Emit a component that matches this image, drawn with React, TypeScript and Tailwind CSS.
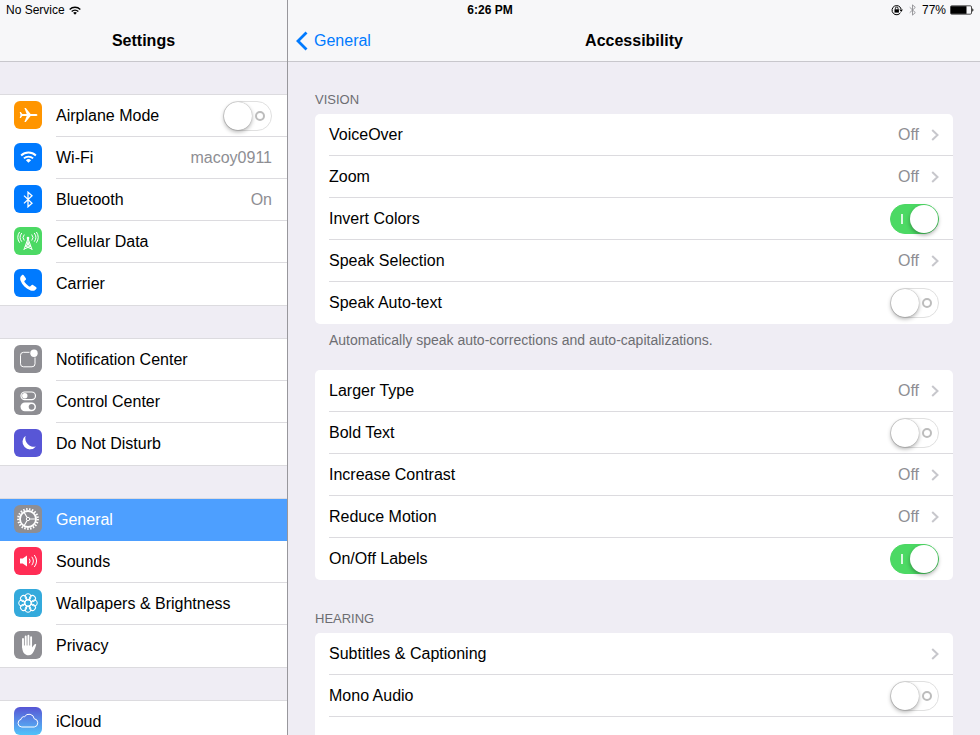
import React, { useState } from "react";
import clsx from "clsx";

type Item = {
  label: string;
  icon?: React.ReactNode;
  iconBg?: string;
  value?: string;
  toggle?: boolean;
  on?: boolean;
  active?: boolean;
};

const PlaneIcon = () => (
  <svg viewBox="0 0 28 28" className="size-7" fill="#fff">
    <path d="M23.500 14c0-.7-.8-1.100-2-1.100h-4.900L11.800 7h-1.400l2.300 5.900H8.300L6.800 11.100H5.700L6.500 14l-.8 2.900h1.100l1.500-1.800h4.400L10.400 21h1.400l4.800-5.900h4.900c1.200 0 2-.4 2-1.100z" />
  </svg>
);

const WifiIcon = ({ className }: { className?: string }) => (
  <svg viewBox="0 0 18 13" className={className} fill="none" stroke="currentColor" strokeWidth="2">
    <path d="M1 4.900a11.500 11.500 0 0 1 16 0" />
    <path d="M4 8a7.300 7.300 0 0 1 10 0" />
    <path d="M9 12.800 6.200 10a4 4 0 0 1 5.600 0z" fill="currentColor" stroke="none" />
  </svg>
);

const BluetoothIcon = ({ className }: { className?: string }) => (
  <svg viewBox="0 0 10 17" className={className} fill="none" stroke="currentColor" strokeWidth="1.300">
    <path d="M1 4.600 9 12.200l-4 3.600V1.200l4 3.600-8 7.600" />
  </svg>
);

const CellularIcon = () => (
  <svg viewBox="0 0 28 28" className="size-7" fill="none" stroke="#fff" strokeWidth="1">
    <path d="M14 11.500 9.800 23M14 11.500 18.200 23M12.600 16h2.800M11.500 19h5M12.600 16l4.200 3.200L10.300 22M15.400 16l-4.200 3.200 6.500 2.800M14 11v5" />
    <circle cx="14" cy="11" r="1.300" fill="#fff" stroke="none" />
    <path d="M10.300 13.500a4.500 4.500 0 0 1 0-6M17.700 13.500a4.500 4.500 0 0 0 0-6M7.800 14.700a7 7 0 0 1 0-8.700M20.200 14.700a7 7 0 0 0 0-8.700M5.600 15.700a9.500 9.500 0 0 1 0-10.700M22.400 15.700a9.500 9.500 0 0 0 0-10.700" />
  </svg>
);

const PhoneIcon = () => (
  <svg viewBox="0 0 28 28" className="size-7" fill="#fff">
    <path d="M7.900 6.200c.8-.7 1.500-.5 2 .2l1.900 2.800c.4.7.3 1.300-.3 1.800l-.9.8c-.4.4-.4.800-.1 1.300a15 15 0 0 0 4.600 4.300c.5.300.9.300 1.300-.1l.8-.9c.5-.6 1.200-.7 1.800-.3l2.900 1.800c.8.500.9 1.200.3 2-1.400 1.800-3.200 2.500-5.600 1.500C11.900 19.500 8.200 16 6.500 11.500 5.700 9.200 6.300 7.600 7.900 6.200z" />
  </svg>
);

const NotificationIcon = () => (
  <svg viewBox="0 0 28 28" className="size-7" fill="none" stroke="#fff">
    <path d="M15.500 7.300H9.500a3 3 0 0 0-3 3v8.500a3 3 0 0 0 3 3h8.500a3 3 0 0 0 3-3V12.500" />
    <circle cx="20" cy="8.200" r="3.700" fill="#fff" stroke="none" />
  </svg>
);

const ControlIcon = () => (
  <svg viewBox="0 0 28 28" className="size-7" fill="none" stroke="#fff" strokeWidth="1.200">
    <rect x="7" y="5" width="14.500" height="7.600" rx="3.800" />
    <circle cx="10.800" cy="8.800" r="2.700" fill="#fff" stroke="none" />
    <rect x="6.500" y="15.400" width="15.500" height="8.800" rx="4.400" fill="#fff" stroke="none" />
    <circle cx="17.600" cy="19.800" r="2.900" fill="#8e8e93" stroke="none" />
  </svg>
);

const MoonIcon = () => (
  <svg viewBox="0 0 28 28" className="size-7" fill="#fff">
    <path d="M11.600 6.800a8.600 8.600 0 0 0 10.300 10.700A7.500 7.500 0 1 1 11.600 6.800z" />
  </svg>
);

const GearIcon = () => (
  <svg viewBox="0 0 28 28" className="size-7" fill="none" stroke="#fff">
    <circle cx="14" cy="14" r="9.800" strokeWidth="2.200" strokeDasharray="1.466 1.466" />
    <circle cx="14" cy="14" r="8" strokeWidth="1.800" />
    <circle cx="14" cy="14" r="1.700" strokeWidth="1" />
    <path d="M16 14h5.500M13 12.300l-3.200-5.500M13 15.700l-3.200 5.500" strokeWidth="1.200" />
  </svg>
);

const SoundIcon = () => (
  <svg viewBox="0 0 28 28" className="size-7" fill="none" stroke="#fff" strokeWidth="1">
    <path d="M6 11.500h2.800L13 8.500v11l-4.200-3H6z" fill="#fff" stroke="none" />
    <path d="M15.300 11.700a4 4 0 0 1 0 4.600M17.800 9.800a7 7 0 0 1 0 8.400M20.300 8a10 10 0 0 1 0 12" />
  </svg>
);

const FlowerIcon = () => (
  <svg viewBox="0 0 28 28" className="size-7" fill="none" stroke="#fff">
    {[0, 45, 90, 135, 180, 225, 270, 315].map((deg) => (
      <circle key={deg} cx="14" cy="7.700" r="3" transform={`rotate(${deg} 14 14)`} />
    ))}
    <circle cx="14" cy="14" r="3" />
  </svg>
);

const HandIcon = () => (
  <svg viewBox="0 0 28 28" className="size-7" fill="none" stroke="#fff" strokeWidth="1.900" strokeLinecap="round">
    <path d="M9 8V16M11.700 5.500V15M14.400 4.800V15M17.100 6.300V15" />
    <path d="M8.050 14.500h10v2l2.300-2.900c.8-1 2.200-.7 1.800.5-1.300 3.700-2.800 10.200-7.400 10.200-4.700 0-6.700-3.700-6.700-9.800z" fill="#fff" stroke="none" />
  </svg>
);

const CloudIcon = () => (
  <svg viewBox="0 0 28 28" className="size-7" fill="none" stroke="#fff" strokeWidth="1">
    <path d="M7.800 20a3.900 3.900 0 0 1-.7-7.700 2.900 2.900 0 0 1 3.500-2.600 5.200 5.200 0 0 1 9.600 2 4.200 4.200 0 0 1 .1 8.300z" />
  </svg>
);

const LockIcon = () => (
  <svg viewBox="0 0 12 12" className="size-3" fill="none" stroke="#000">
    <path d="M9.500 8.700A4.600 4.600 0 1 1 10.100 5" />
    <path d="M8.300 5.500h3.600L10.200 8z" fill="#000" stroke="none" />
    <rect x="3.500" y="5.300" width="4.400" height="3.300" fill="#000" stroke="none" />
    <path d="M4.400 5.500V4.300a1.300 1.300 0 0 1 2.600 0v1.200" strokeWidth=".9" />
  </svg>
);

const BatteryIcon = () => (
  <svg viewBox="0 0 24 10" className="w-6 h-2.5">
    <rect x=".5" y=".8" width="21" height="8.400" rx="1.200" fill="none" stroke="#000" strokeWidth=".7" />
    <rect x="1" y="1.200" width="15.500" height="7.600" fill="#000" />
    <path d="M22.300 3.300c1.500.5 1.500 2.900 0 3.400z" fill="#000" />
  </svg>
);

const Chevron = () => (
  <svg viewBox="0 0 8 12" className="ml-3 w-2 h-3" fill="none" stroke="#c7c7cc" strokeWidth="2">
    <path d="M1.200 1 6.500 6l-5.300 5" />
  </svg>
);

const sidebarGroups: Item[][] = [
  [
    { label: "Airplane Mode", icon: <PlaneIcon />, iconBg: "bg-[#ff9500]", toggle: true },
    { label: "Wi-Fi", icon: <WifiIcon className="w-[17px] h-3" />, iconBg: "bg-[#007aff]", value: "macoy0911" },
    { label: "Bluetooth", icon: <BluetoothIcon className="w-2.5 h-[17px]" />, iconBg: "bg-[#007aff]", value: "On" },
    { label: "Cellular Data", icon: <CellularIcon />, iconBg: "bg-[#4cd964]" },
    { label: "Carrier", icon: <PhoneIcon />, iconBg: "bg-[#007aff]" },
  ],
  [
    { label: "Notification Center", icon: <NotificationIcon />, iconBg: "bg-[#8e8e93]" },
    { label: "Control Center", icon: <ControlIcon />, iconBg: "bg-[#8e8e93]" },
    { label: "Do Not Disturb", icon: <MoonIcon />, iconBg: "bg-[#5856d6]" },
  ],
  [
    { label: "General", icon: <GearIcon />, iconBg: "bg-[#8e8e93]", active: true },
    { label: "Sounds", icon: <SoundIcon />, iconBg: "bg-[#ff2d55]" },
    { label: "Wallpapers & Brightness", icon: <FlowerIcon />, iconBg: "bg-[#34aadc]" },
    { label: "Privacy", icon: <HandIcon />, iconBg: "bg-[#8e8e93]" },
  ],
  [{ label: "iCloud", icon: <CloudIcon />, iconBg: "bg-linear-to-b from-[#5654d4] to-[#4fc3fa]" }],
];

const visionItems: Item[] = [
  { label: "VoiceOver", value: "Off" },
  { label: "Zoom", value: "Off" },
  { label: "Invert Colors", toggle: true, on: true },
  { label: "Speak Selection", value: "Off" },
  { label: "Speak Auto-text", toggle: true },
];

const displayItems: Item[] = [
  { label: "Larger Type", value: "Off" },
  { label: "Bold Text", toggle: true },
  { label: "Increase Contrast", value: "Off" },
  { label: "Reduce Motion", value: "Off" },
  { label: "On/Off Labels", toggle: true, on: true },
];

const hearingItems: Item[] = [
  { label: "Subtitles & Captioning" },
  { label: "Mono Audio", toggle: true },
];

const Switch = ({ id, defaultOn = false }: { id: string; defaultOn?: boolean }) => {
  const [on, setOn] = useState(defaultOn);
  return (
    <input
      id={id}
      type="checkbox"
      role="switch"
      checked={on}
      onChange={() => setOn(!on)}
      className={clsx(
        "appearance-none shrink-0 flex items-center justify-between w-[49px] h-[30px] rounded-full border cursor-pointer",
        "before:size-7 before:rounded-full before:bg-white",
        on
          ? "flex-row-reverse border-[#4cd964] bg-[#4cd964] before:shadow-[0_2px_4px_rgba(0,0,0,0.35)] after:ml-2.5 after:w-0.5 after:h-2.5 after:bg-white/80"
          : "border-[#e0e0e0] bg-white before:shadow-[0_2px_4px_rgba(0,0,0,0.3),0_0_1px_rgba(0,0,0,0.4)] after:mr-1.5 after:size-2.5 after:rounded-full after:border-2 after:border-[#bcbcbc]"
      )}
    />
  );
};

const SidebarRow = ({ item, last }: { item: Item; last: boolean }) => {
  const id = "side-" + item.label.toLowerCase().replace(/\W+/g, "-");
  const content = (
    <>
      <span
        className={clsx(
          "size-7 mb-0.5 shrink-0 rounded-md flex items-center justify-center text-white overflow-hidden",
          item.iconBg
        )}
      >
        {item.icon}
      </span>
      <span
        className={clsx(
          "flex-1 h-full ml-3.5 pr-[15px] flex items-center justify-between border-b",
          last || item.active ? "border-transparent" : "border-[#dcdbdf]"
        )}
      >
        {item.toggle ? <label htmlFor={id}>{item.label}</label> : <span>{item.label}</span>}
        {item.value && <span className="text-[#8e8e93]">{item.value}</span>}
        {item.toggle && <Switch id={id} />}
      </span>
    </>
  );
  const rowClass = clsx(
    "flex items-center h-[42px] pl-3.5",
    item.active ? "bg-[#4d9fff] text-white" : "bg-white"
  );

  return (
    <li>
      {item.toggle ? (
        <div className={rowClass}>{content}</div>
      ) : (
        <a href="#" aria-current={item.active ? "page" : undefined} className={rowClass}>
          {content}
        </a>
      )}
    </li>
  );
};

const CardRow = ({ item, last }: { item: Item; last: boolean }) => {
  const id = "opt-" + item.label.toLowerCase().replace(/\W+/g, "-");
  const rowClass = clsx(
    "flex items-center h-[42px] ml-3.5 pr-3.5 border-b",
    last ? "border-transparent" : "border-[#dcdbdf]"
  );

  return (
    <li>
      {item.toggle ? (
        <div className={rowClass}>
          <label htmlFor={id} className="flex-1">
            {item.label}
          </label>
          <Switch id={id} defaultOn={item.on} />
        </div>
      ) : (
        <a href="#" className={rowClass}>
          <span className="flex-1">{item.label}</span>
          {item.value && <span className="text-[#8e8e93]">{item.value}</span>}
          <Chevron />
        </a>
      )}
    </li>
  );
};

const Card = ({ items, open }: { items: Item[]; open?: boolean }) => (
  <ul className="bg-white rounded-[5px]">
    {items.map((item, i) => (
      <CardRow key={item.label} item={item} last={!open && i === items.length - 1} />
    ))}
    {open && <li className="h-[42px]"></li>}
  </ul>
);

const StatusBar = () => (
  <div className="absolute inset-x-0 top-0 z-10 h-5 px-1.5 grid grid-cols-3 items-center text-xs text-black">
    <div className="flex items-center gap-1">
      <span>No Service</span>
      <WifiIcon className="w-3 h-[9px]" />
    </div>
    <span className="text-center font-bold">6:26 PM</span>
    <div className="flex items-center justify-end gap-1">
      <LockIcon />
      <BluetoothIcon className="mx-0.5 w-[7px] h-3 text-[#8e8e93]" />
      <span>77%</span>
      <BatteryIcon />
    </div>
  </div>
);

const App = () => {
  return (
    <div className="relative flex h-screen overflow-hidden bg-[#efedf4] font-['Liberation_Sans',Arial,sans-serif] text-base text-black">
      <StatusBar />

      <aside className="w-72 shrink-0 flex flex-col border-r border-[#98979c]">
        <header className="h-[62px] shrink-0 pt-5 flex items-center justify-center bg-[#f7f7f9] border-b border-[#c8c7cc]">
          <h2 className="font-bold">Settings</h2>
        </header>
        <nav className="flex-1 min-h-0 overflow-hidden pt-8 flex flex-col gap-8">
          {sidebarGroups.map((group, i) => (
            <ul key={i} className="shrink-0 border-y border-[#dcdbdf]">
              {group.map((item, j) => (
                <SidebarRow key={item.label} item={item} last={j === group.length - 1} />
              ))}
            </ul>
          ))}
        </nav>
      </aside>

      <main className="flex-1 min-w-0 flex flex-col">
        <header className="h-[62px] shrink-0 pt-5 px-2 grid grid-cols-[1fr_auto_1fr] items-center bg-[#f7f7f9] border-b border-[#c8c7cc]">
          <a href="#" className="flex items-center gap-1.5 text-[#007aff]">
            <svg viewBox="0 0 12 20" className="w-3 h-5" fill="none" stroke="currentColor" strokeWidth="2.800">
              <path d="M10.500 1.500 2 10l8.500 8.500" />
            </svg>
            General
          </a>
          <h1 className="font-bold">Accessibility</h1>
        </header>

        <div className="flex-1 min-h-0 overflow-hidden px-[27px] pt-[30px]">
          <section>
            <h3 className="mb-1.5 text-[13px] leading-4 text-[#6d6d72]">VISION</h3>
            <Card items={visionItems} />
            <p className="pt-2 px-3.5 text-sm leading-4 text-[#6d6d72]">
              Automatically speak auto-corrections and auto-capitalizations.
            </p>
          </section>
          <section className="mt-[22px]">
            <Card items={displayItems} />
          </section>
          <section className="mt-[31px]">
            <h3 className="mb-1.5 text-[13px] leading-4 text-[#6d6d72]">HEARING</h3>
            <Card items={hearingItems} open />
          </section>
        </div>
      </main>
    </div>
  );
};

export default App;
